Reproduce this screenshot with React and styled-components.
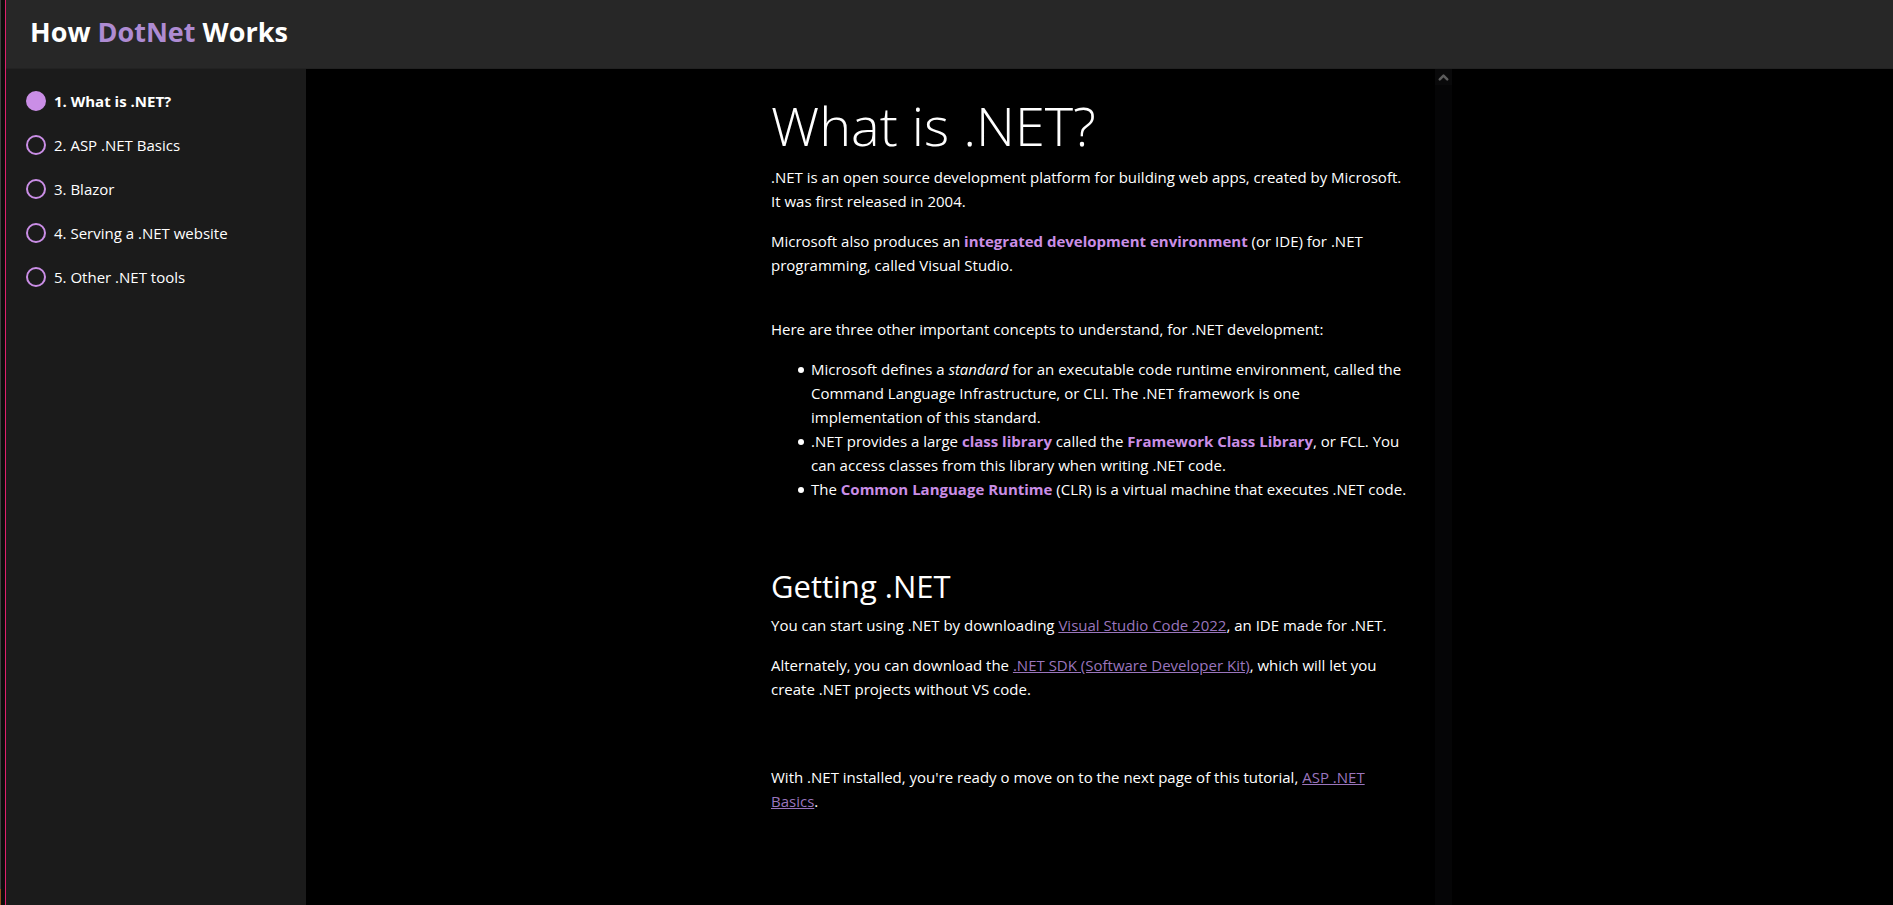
import React from "react";
import styled, { createGlobalStyle } from "styled-components";
import { ChevronUp } from "lucide-react";

const GlobalStyle = createGlobalStyle`
  *, *::before, *::after { box-sizing: border-box; }
  body {
    margin: 0;
    background: #000;
    color: #fff;
    font-family: "Segoe UI", "Open Sans", "Noto Sans", sans-serif;
    font-size: 15px;
    line-height: 24px;
  }
`;

const Window = styled.div`
  display: flex;
  height: 100vh;
  overflow: hidden;
`;

const WindowEdge = styled.div`
  flex: none;
  width: 6px;
  background:
    linear-gradient(#994d1c, #994d1c) left bottom / 1px 16px no-repeat,
    linear-gradient(#404040, #404040) left top / 1px 100% no-repeat,
    #0c0c0c;
  border-right: 1px solid #e0206c;
`;

const Page = styled.div`
  flex: 1;
  min-width: 0;
  display: flex;
  flex-direction: column;
`;

const Header = styled.header`
  flex: none;
  padding: 12px 24px 16px;
  background: #272727;
  border-bottom: 1px solid #222;
`;

const SiteTitle = styled.h1`
  margin: 0;
  font-size: 27px;
  line-height: 40px;
  font-weight: 700;
`;

const Brand = styled.span`
  color: #ae8bd2;
`;

const Body = styled.div`
  flex: 1;
  min-height: 0;
  display: flex;
`;

const Sidebar = styled.nav`
  flex: none;
  width: 300px;
  padding: 20px;
  background: #1b1b1b;
`;

const Steps = styled.ul`
  margin: 0;
  padding: 0;
  list-style: none;
  display: flex;
  flex-direction: column;
  gap: 20px;
`;

const StepLink = styled.a`
  display: flex;
  align-items: flex-start;
  gap: 8px;
  height: 24px;
  color: #fff;
  font-weight: ${(p) => (p.$current ? 700 : 400)};
  text-decoration: none;
`;

const Marker = styled.span`
  flex: none;
  width: 20px;
  height: 20px;
  margin-top: 2px;
  border: 2px solid #ca8ee6;
  border-radius: 50%;
  background: ${(p) => (p.$current ? "#ca8ee6" : "transparent")};
`;

const Main = styled.main`
  flex: 1;
  min-width: 0;
  display: flex;
  justify-content: center;
`;

const Reader = styled.div`
  display: flex;
  width: 100%;
  max-width: 705px;
`;

const Article = styled.article`
  flex: 1;
  min-width: 0;
  padding: 20px 24px 24px;
  overflow: hidden;
`;

const ScrollTrack = styled.div`
  flex: none;
  width: 17px;
  background: #050506;
`;

const ScrollButton = styled.button`
  display: flex;
  align-items: center;
  justify-content: center;
  width: 100%;
  height: 16px;
  padding: 0;
  border: 0;
  background: #09090a;
  color: #5c5c5c;
`;

const PageTitle = styled.h2`
  margin: 0 0 4px;
  font-size: 54px;
  line-height: 72px;
  font-weight: 300;
`;

const SectionTitle = styled.h3`
  margin: 64px 0 6px;
  font-size: 31px;
  line-height: 42px;
  font-weight: 400;
`;

const Paragraph = styled.p`
  margin: ${(p) => p.$space || 0}px 0 0;
`;

const Concepts = styled.ul`
  margin: 16px 0 0;
  padding-left: 27px;
  list-style: none;
`;

const ConceptItem = styled.li`
  display: flex;
  gap: 7px;

  &::before {
    content: "";
    flex: none;
    width: 6px;
    height: 6px;
    margin-top: 10px;
    border-radius: 50%;
    background: currentColor;
  }
`;

const ConceptText = styled.div`
  flex: 1;
  min-width: 0;
`;

const Term = styled.strong`
  color: #ca8ee6;
  font-weight: 700;
`;

const Link = styled.a`
  color: #9a75bd;
  text-decoration: underline;
`;

const steps = [
  "1. What is .NET?",
  "2. ASP .NET Basics",
  "3. Blazor",
  "4. Serving a .NET website",
  "5. Other .NET tools",
];

function Concept({ children }) {
  return (
    <ConceptItem>
      <ConceptText>{children}</ConceptText>
    </ConceptItem>
  );
}

export default function App() {
  return (
    <>
      <GlobalStyle />
      <Window>
        <WindowEdge />
        <Page>
          <Header>
            <SiteTitle>
              How <Brand>DotNet</Brand> Works
            </SiteTitle>
          </Header>
          <Body>
            <Sidebar aria-label="Tutorial">
              <Steps>
                {steps.map((label, i) => (
                  <li key={label}>
                    <StepLink href="#" $current={i === 0} aria-current={i === 0 ? "page" : undefined}>
                      <Marker $current={i === 0} />
                      <span>{label}</span>
                    </StepLink>
                  </li>
                ))}
              </Steps>
            </Sidebar>
            <Main>
              <Reader>
                <Article>
                  <PageTitle>What is .NET?</PageTitle>
                  <Paragraph>
                    .NET is an open source development platform for building web apps, created by
                    Microsoft. It was first released in 2004.
                  </Paragraph>
                  <Paragraph $space={16}>
                    Microsoft also produces an <Term>integrated development environment</Term> (or
                    IDE) for .NET programming, called Visual Studio.
                  </Paragraph>
                  <Paragraph $space={40}>
                    Here are three other important concepts to understand, for .NET development:
                  </Paragraph>
                  <Concepts>
                    <Concept>
                      Microsoft defines a <em>standard</em> for an executable code runtime
                      environment, called the Command Language Infrastructure, or CLI. The .NET
                      framework is one implementation of this standard.
                    </Concept>
                    <Concept>
                      .NET provides a large <Term>class library</Term> called the{" "}
                      <Term>Framework Class Library</Term>, or FCL. You can access classes from this
                      library when writing .NET code.
                    </Concept>
                    <Concept>
                      The <Term>Common Language Runtime</Term> (CLR) is a virtual machine that
                      executes .NET code.
                    </Concept>
                  </Concepts>
                  <SectionTitle>Getting .NET</SectionTitle>
                  <Paragraph>
                    You can start using .NET by downloading{" "}
                    <Link href="#">Visual Studio Code 2022</Link>, an IDE made for .NET.
                  </Paragraph>
                  <Paragraph $space={16}>
                    Alternately, you can download the{" "}
                    <Link href="#">.NET SDK (Software Developer Kit)</Link>, which will let you
                    create .NET projects without VS code.
                  </Paragraph>
                  <Paragraph $space={64}>
                    With .NET installed, you're ready o move on to the next page of this tutorial,{" "}
                    <Link href="#">ASP .NET Basics</Link>.
                  </Paragraph>
                </Article>
                <ScrollTrack>
                  <ScrollButton type="button" aria-label="Scroll up">
                    <ChevronUp size={15} strokeWidth={4} />
                  </ScrollButton>
                </ScrollTrack>
              </Reader>
            </Main>
          </Body>
        </Page>
      </Window>
    </>
  );
}
